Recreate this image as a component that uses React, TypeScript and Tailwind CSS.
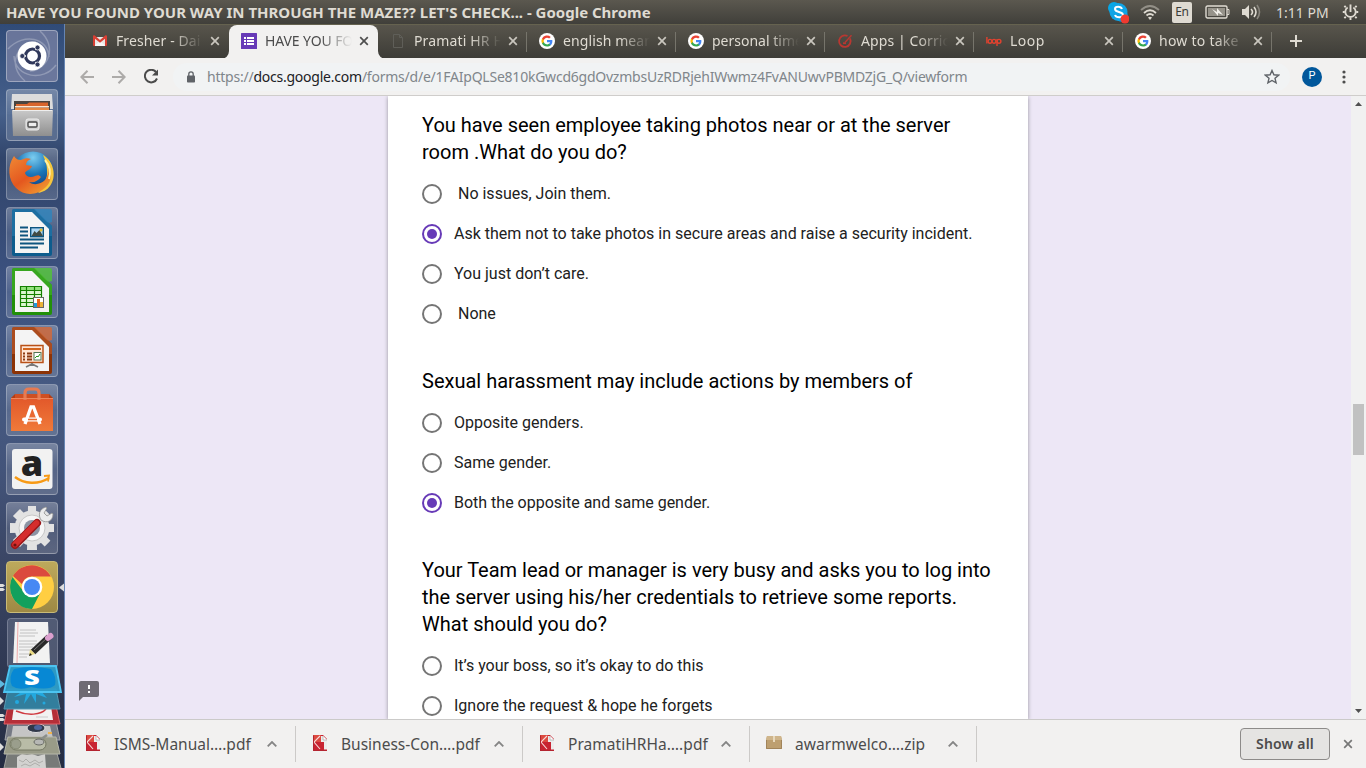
import React from "react";

const UI = "font-['Noto_Sans','Liberation_Sans',sans-serif]";

/* ---------- favicons ---------- */
const Gmail = () => (
  <svg width="16" height="16" viewBox="0 0 16 16">
    <path d="M2 4h12v9H2z" fill="#e8e6e4" />
    <path d="M2 13l5-4h2l5 4z" fill="#f8f8f8" />
    <path d="M1 3.500C1 2.500 2 2 2.800 2.600L8 7l5.200-4.400C14 2 15 2.500 15 3.500V12a1 1 0 0 1-1 1h-1V5.800L8 9.800 3 5.800V13H2a1 1 0 0 1-1-1z" fill="#d93f34" />
  </svg>
);
const FormsIcon = () => (
  <svg width="16" height="16" viewBox="0 0 16 16">
    <rect width="16" height="16" rx="0.500" fill="#673ab7" />
    <path d="M3 4h2v2H3zM6 4h7v2H6zM3 7h2v2H3zM6 7h7v2H6zM3 10h2v2H3zM6 10h7v2H6z" fill="#fff" />
  </svg>
);
const PageIcon = () => (
  <svg width="16" height="16" viewBox="0 0 16 16" fill="none" stroke="#5f5e58">
    <path d="M3.500 1.500h6l3 3v10h-9zM9.500 1.500v3h3" />
  </svg>
);
const GoogleIcon = () => (
  <svg width="16" height="16" viewBox="0 0 16 16">
    <circle cx="8" cy="8" r="8" fill="#fff" />
    <g transform="translate(2.400 2.400) scale(0.467)">
      <path fill="#4285f4" d="M23.500 12.300c0-.8-.1-1.600-.2-2.300H12v4.500h6.500c-.3 1.500-1.100 2.800-2.400 3.600v3h3.900c2.200-2.100 3.500-5.200 3.500-8.800z" />
      <path fill="#34a853" d="M12 24c3.200 0 6-1.100 7.900-2.900l-3.900-3c-1.100.7-2.400 1.200-4 1.200-3.100 0-5.800-2.100-6.700-4.900h-4v3.100C3.300 21.400 7.300 24 12 24z" />
      <path fill="#fbbc05" d="M5.300 14.400a7 7 0 0 1 0-4.600V6.700h-4a12 12 0 0 0 0 10.800z" />
      <path fill="#ea4335" d="M12 4.800c1.800 0 3.300.6 4.600 1.800L20 3.200A12 12 0 0 0 1.300 6.700l4 3.100C6.200 6.900 8.900 4.800 12 4.800z" />
    </g>
  </svg>
);
const GaugeIcon = () => (
  <svg width="16" height="16" viewBox="0 0 16 16" fill="none" stroke="#b93731" strokeWidth="1.800">
    <path d="M10.500 3A5.800 5.800 0 1 0 13 5.500" />
    <path d="M14.500 2.200L8 9.500" strokeWidth="1.400" />
    <path d="M6 10.200h3" />
  </svg>
);
const LoopIcon = () => (
  <svg width="16" height="16" viewBox="0 0 16 16" fill="none" stroke="#e2422f" strokeWidth="1.400">
    <path d="M.9 4v6.500M11 6v7" />
    <circle cx="4" cy="8.300" r="1.900" /><circle cx="8" cy="8.300" r="1.900" /><circle cx="13" cy="8.300" r="1.900" />
  </svg>
);
const Cross = ({ color }: { color: string }) => (
  <svg width="10" height="10" viewBox="0 0 10 10" stroke={color} strokeWidth="1.700"><path d="M1.200 1.200l7.600 7.600M8.800 1.200L1.200 8.800" /></svg>
);

type TabData = { title: string; icon: React.ReactNode; active?: boolean; sep?: boolean; tracking: string };
const tabs: TabData[] = [
  { title: "Fresher - Dai", icon: <Gmail />, tracking: "tracking-[0.1px]" },
  { title: "HAVE YOU FO", icon: <FormsIcon />, active: true, tracking: "tracking-[-0.1px]" },
  { title: "Pramati HR H", icon: <PageIcon />, sep: true, tracking: "tracking-[0.15px]" },
  { title: "english mean", icon: <GoogleIcon />, sep: true, tracking: "tracking-[0.1px]" },
  { title: "personal time", icon: <GoogleIcon />, sep: true, tracking: "tracking-[0px]" },
  { title: "Apps | Corric", icon: <GaugeIcon />, sep: true, tracking: "tracking-[0.1px]" },
  { title: "Loop", icon: <LoopIcon />, sep: true, tracking: "tracking-[0.5px]" },
  { title: "how to take", icon: <GoogleIcon />, sep: true, tracking: "tracking-[0.25px]" },
];

const Tab = ({ t }: { t: TabData }) => (
  <div className={"relative flex h-[34px] w-[149px] shrink-0 items-center pb-px pl-3 " + (t.active ? "rounded-t-lg bg-[#f2f1f0] text-[#4c4c4c]" : "text-[#dfdbd2]")}>
    {t.active && (
      <svg className="absolute bottom-0 -left-2" width="8" height="8"><path d="M8 0v8H0a8 8 0 0 0 8-8z" fill="#f2f1f0" /></svg>
    )}
    {t.active && (
      <svg className="absolute -right-2 bottom-0" width="8" height="8"><path d="M0 0v8h8a8 8 0 0 1-8-8z" fill="#f2f1f0" /></svg>
    )}
    <span className="w-4 shrink-0">{t.icon}</span>
    <span className={"ml-2 w-[87px] overflow-hidden text-[14px] leading-5 whitespace-nowrap [mask-image:linear-gradient(to_right,black_56px,transparent_87px)] " + t.tracking}>{t.title}</span>
    <span className="ml-[7px]"><Cross color={t.active ? "#4f4f4f" : "#c9c6be"} /></span>
    {t.sep && <span className="absolute top-[7px] right-0 h-5 w-px bg-[#76746b]" />}
  </div>
);

/* ---------- launcher icons, each on a 52px tile ---------- */
const Ubuntu = () => (
  <>
    <g fill="none" stroke="#fff" strokeOpacity=".25" strokeWidth="1.500">
      <path d="M2 19C18 2 42 8 43 27M50 35C38 52 9 48 8 26M19 51C0 35 12 12 30 12M34 1c18 16 8 39-10 40" />
    </g>
    <circle cx="26" cy="26" r="14.500" fill="#fff" />
    <circle cx="26.500" cy="26" r="7" fill="none" stroke="#30385b" strokeWidth="3.200" />
    <g stroke="#fff" strokeWidth="1.300"><path d="M20 26h-5M29.500 20l2.500-4M29.500 32l2.500 4" /></g>
    <g fill="#30385b" stroke="#fff" strokeWidth=".7"><circle cx="16.300" cy="26" r="2.500" /><circle cx="31.500" cy="17.500" r="2.500" /><circle cx="31.500" cy="34.500" r="2.500" /></g>
  </>
);
const Files = () => (
  <>
    <defs><linearGradient id="steel" x1="0" y1="0" x2="0" y2="1"><stop stopColor="#c9c9c9" /><stop offset="1" stopColor="#8f8f8f" /></linearGradient></defs>
    <path d="M6 5h40l1 15H5z" fill="#dcdcdc" /><path d="M8 12h36v13H8z" fill="#4a4540" />
    <path d="M10 15h11l2-1.500h19v5H10z" fill="#d9652c" /><path d="M9 17h34v1.500H9z" fill="#fbe6cf" /><path d="M9 19h34v3H9z" fill="#e88a45" />
    <path d="M6 21h41l-1 26H7z" fill="url(#steel)" /><path d="M7 21.500h39" stroke="#eee" />
    <rect x="20" y="30" width="13" height="11" rx="2" fill="#d0d0d0" stroke="#eee" /><rect x="22" y="33" width="9" height="5" rx="1" fill="#eee" stroke="#4a4a4a" strokeWidth="1.400" />
  </>
);
const Firefox = () => (
  <>
    <defs>
      <radialGradient id="sky" cx=".5" cy=".15" r=".8"><stop stopColor="#7ccdf0" /><stop offset=".5" stopColor="#1b76b8" /><stop offset="1" stopColor="#123a7c" /></radialGradient>
      <linearGradient id="fire" x1="0" y1="0" x2=".8" y2="1"><stop stopColor="#f08a35" /><stop offset=".55" stopColor="#e4571f" /><stop offset="1" stopColor="#f19a32" /></linearGradient>
    </defs>
    <circle cx="27" cy="24" r="20.500" fill="url(#sky)" />
    <path d="M37 7c11 6 14 22 7 31-3 4-7 6-12 7 6-7 10-15 9-23 0-5-2-10-4-15z" fill="#f6c63d" />
    <path d="M8 8c2 3 4 4 7 4 4-2 7-2 10-1-3 1-5 3-5 6l6 1c-1 4-6 4-7 7 1 4 6 5 10 3 3-1 4-1 6 1-3 4-7 6-12 5 5 4 12 2 16-2 3-4 4-9 3-14 4 7 4 15-2 21-9 9-22 9-30 1C2 32 1 18 8 8z" fill="url(#fire)" />
    <path d="M39 12c5 6 6 12 4 19" stroke="#fff0a0" strokeWidth="2" fill="none" />
  </>
);
const Doc = ({ c, d, children }: { c: string; d: string; children: React.ReactNode }) => (
  <>
    <path d="M8 2h21l17 17v28a2 2 0 0 1-2 2H8a2 2 0 0 1-2-2V4a2 2 0 0 1 2-2z" fill={d} /><path d="M6 4a2 2 0 0 1 2-2h21l17 17v10H6z" fill={c} opacity=".45" />
    <path d="M9 5h17l17 17v24H9z" fill="#f4f4f4" /><path d="M28 2h16a2 2 0 0 1 2 2v11q-4 2-6-1z" fill={c} opacity=".85" />
    {children}
  </>
);
const Writer = () => (
  <Doc c="#3184bb" d="#0d5c8d">
    <path d="M14 20.500h8M14 24.500h8M14 28.500h8M14 32.500h24M14 36.500h24M14 40.500h18" stroke="#0d557f" strokeWidth="2" />
    <rect x="24.700" y="20.700" width="12.600" height="9" fill="#aed7f3" stroke="#0d557f" strokeWidth="1.400" /><path d="M25.500 29l3-5 2 2 3-3 3.500 6z" fill="#414b43" /><circle cx="35" cy="23" r="1.500" fill="#e3bd33" />
  </Doc>
);
const Calc = () => (
  <Doc c="#52c13b" d="#229009">
    <rect x="14" y="20" width="22" height="21" fill="#94e37c" /><path d="M14 25h22v16H14z" fill="#dcf6d2" /><path d="M14.500 20.500h21v20h-21zM14 24.500h22M14 28.500h22M14 32.500h22M14 36.500h22M20.500 20v21M28.500 20v21" stroke="#148000" fill="none" strokeWidth="1.200" />
    <rect x="27.500" y="31.500" width="10" height="10" fill="#fff" stroke="#666" /><path d="M28 37h3v4h-3z" fill="#229bd8" /><path d="M31 33h3v8h-3z" fill="#ea6518" /><path d="M34 36h3v5h-3z" fill="#e9b43a" />
  </Doc>
);
const Impress = () => (
  <Doc c="#d06a3c" d="#8c3306">
    <rect x="15" y="20.500" width="22" height="17" fill="#ffe5d4" stroke="#b95117" strokeWidth="1.500" /><path d="M17 24h18" stroke="#d3651d" strokeWidth="2" />
    <path d="M17 28.500h2M17 31.500h2M17 34.500h2M21 28.500h5M21 31.500h5M21 34.500h5" stroke="#8b3911" strokeWidth="1.800" /><rect x="28" y="27.500" width="7" height="7.500" fill="#fff" stroke="#575" /><path d="M29 33l2-2 1 1 2-3" stroke="#279719" fill="none" />
    <path d="M26 38v3M26 39l-6 3M26 39l6 3" stroke="#777" strokeWidth="1.700" />
  </Doc>
);
const Software = () => (
  <>
    <defs><linearGradient id="bag" x1="0" y1="0" x2="0" y2="1"><stop stopColor="#e2582a" /><stop offset="1" stopColor="#f07a3a" /></linearGradient></defs>
    <path d="M5 14l4-4v4M47 14l-4-4v4" fill="#b63c11" /><path d="M9 10h34v5H9z" fill="#cf4f22" />
    <path d="M5 14h42v33H5z" fill="url(#bag)" />
    <path d="M19 16V9q0-4 4-4h6q4 0 4 4v7" fill="none" stroke="#e77a51" strokeWidth="3.200" /><path d="M5 14.500h42" stroke="#ee865c" />
    <path d="M19 40l6-17h2.500L34 40" fill="none" stroke="#fff" strokeWidth="3.300" /><path d="M18 35.500h16" stroke="#fff" strokeWidth="4" strokeLinecap="round" /><path d="M22 35.500h9" stroke="#ec6c33" strokeWidth="1.600" />
  </>
);
const Amazon = () => (
  <>
    <rect x="6" y="6" width="40.500" height="40" rx="3" fill="#f2f2f2" />
    <text x="26" y="33" textAnchor="middle" fontFamily="Open Sans" fontWeight="800" fontSize="36" fill="#222">a</text>
    <path d="M9 34c9 7 23 8 34 1" fill="none" stroke="#f79a15" strokeWidth="2.500" /><path d="M38 33l5-.5-1 6" fill="none" stroke="#f79a15" strokeWidth="1.800" />
  </>
);
const Settings = () => (
  <>
    <g fill="#e2e2e2">
      {[0, 45, 90, 135].map((a) => <path key={a} d="M22 4h8l1 44H21z" transform={`rotate(${a} 26 26)`} />)}
      <circle cx="26" cy="26" r="17.500" />
    </g>
    <circle cx="26" cy="26" r="13" fill="#f6f6f6" stroke="#c7c7c7" /><circle cx="26" cy="26" r="8" fill="#8c94a4" />
    <path d="M33 20l5-5" stroke="#e4e4e4" strokeWidth="5" />
    <path d="M35 18c-3-5-2-11 5-13l1 1-3 5 3 3 5-3 1 1c0 7-6 10-12 6z" fill="#ececec" stroke="#8f8f8f" strokeWidth=".8" />
    <path d="M9 43L31 21" stroke="#9b1719" strokeWidth="8" strokeLinecap="round" /><path d="M9 42.500L30.500 21" stroke="#d52d2d" strokeWidth="5.500" strokeLinecap="round" /><circle cx="9" cy="43" r="1.600" fill="#6b1212" />
  </>
);
const Chrome = () => (
  <>
    <circle cx="26" cy="26" r="22" fill="#ffce42" />
    <path d="M7 15a22 22 0 0 1 38 0.500H26c-6 0-9 4-9.600 8z" fill="#db4a3e" /><path d="M6.500 16A22 22 0 0 0 26 48l8.500-16.500c-5 6-14 4.500-17-1z" fill="#12a05d" />
    <circle cx="26" cy="26" r="10.300" fill="#fff" /><circle cx="26" cy="26" r="8" fill="#4688f4" />
  </>
);
const launcher = [Ubuntu, Files, Firefox, Writer, Calc, Impress, Software, Amazon, Settings, Chrome];

const Stack = () => (
  <svg width="64" height="155" viewBox="0 0 64 155" className="block shrink-0">
    <rect x="7.500" y="5.500" width="50" height="49" rx="3" fill="#69728a" fillOpacity=".55" stroke="#a8aebf" strokeOpacity=".5" />
    <path d="M15 9h33l2 41H13z" fill="#f2f2f2" /><path d="M18 9l-1 41" stroke="#efaaaa" />
    <path d="M20 17h16M20 20h18M19 23h16M19 28h18M19 31h19M19 34h14M19 37h12M19 41h10M19 44h8" stroke="#bbb" strokeWidth=".9" />
    <path d="M33 39L49 24" stroke="#292929" strokeWidth="6.500" /><path d="M34 37L48 24" stroke="#737373" /><path d="M29 43l1-7 5 5z" fill="#e9d982" /><path d="M29 43l1-3 2 2z" fill="#222" /><path d="M48 25l2.500-2" stroke="#db9fce" strokeWidth="6" strokeLinecap="round" />
    <path d="M8 137h48l5 18H4z" fill="#777a78" stroke="#a1a39e" /><path d="M17 144l5-3 5 1 5-1 6 2 7-2 1 14H17z" fill="#d2d2d0" /><path d="M19 147l4 2 3-3 4 4 5-3 4 3 4-2M21 153l4-2 5 2 5-3 5 3" stroke="#aeaeab" fill="none" />
    <path d="M8 109h48l4 18H5z" fill="#757984" stroke="#a4a6ab" /><path d="M13 113h37l3 12H11z" fill="#c5c5c5" /><ellipse cx="36" cy="115" rx="9" ry="4.500" fill="#303849" stroke="#ddd" /><ellipse cx="38" cy="114.500" rx="4" ry="2.500" fill="#4d639b" /><path d="M48 120h4" stroke="#f0b34d" strokeWidth="2" />
    <path d="M8 124h48l4 17H4z" fill="#999b88" stroke="#b7b8ab" /><rect x="10" y="125" width="36" height="12" rx="6" fill="#b9bca7" stroke="#747863" /><ellipse cx="16" cy="131" rx="5" ry="5" fill="#9a9e8c" stroke="#747863" strokeWidth=".7" /><path d="M36 130l11-8" stroke="#8b8e89" strokeWidth="2.500" /><ellipse cx="39" cy="129" rx="5" ry="3" fill="#b6b7b4" stroke="#696b66" />
    <path d="M8 93h48l4 18H4z" fill="#b52f38" stroke="#e06067" /><path d="M14 93h37l2 14H12z" fill="#f2f2f2" /><path d="M16 98c12 5 25 4 30-2" stroke="#d03b42" strokeWidth="1.500" fill="none" /><path d="M36 104h12" stroke="#ccc" />
    <path d="M8 76h48l4 20H4z" fill="#327e9d" stroke="#5798b1" /><path d="M23 78l-9 6 12-3-2 10 7-10 5 9v-9l11 4-6-7z" fill="#23a9df" /><circle cx="17" cy="89" r="2" fill="#23a9df" /><circle cx="44" cy="90" r="1.500" fill="#23a9df" />
    <path d="M10 53h46l5 26H4z" fill="#2e9fcb" fillOpacity=".94" stroke="#4cc4f2" strokeWidth="1.800" /><path d="M14 56q17-4 37 0 6 8 4 16-6 6-24 2-12 4-19-1-4-9 2-17z" fill="#0788d4" />
    <text x="32" y="72" textAnchor="middle" fontFamily="Open Sans" fontWeight="800" fontSize="21" fill="#fff" transform="translate(-9.600 0) scale(1.300 1)">S</text>
    <path d="M0 67l5 4-5 4z" fill="#5fb9df" /><path d="M0 84l4 4-4 4zM0 130l4 4-4 4zM0 101h3l2 2-2 1H0zM0 105h3l2 2-2 1H0z" fill="#ddd" />
  </svg>
);

const Launcher = () => (
  <aside className="relative flex w-[65px] shrink-0 flex-col gap-[7px] overflow-hidden border-r border-[#6685b3] bg-[linear-gradient(to_bottom,#304b78_0,#46608b_12%,#31456b_18%,#3c5280_35%,#465a82_50%,#43547a_60%,#3b4665_72%,#242c42_100%)] pt-[6px]">
    {launcher.map((Icon, i) => (
      <div key={i} className={"ml-[6px] h-[52px] w-[52px] shrink-0 rounded border " + (i === 9 ? "border-[#c9bb77] bg-[linear-gradient(#bda95c,#9e8944)]" : i === 0 ? "border-white/35 bg-[#7780a3]/80" : "border-white/25 bg-[linear-gradient(rgba(255,255,255,.28),rgba(255,255,255,.1)_50%,rgba(255,255,255,.17))]")}>
        <svg width="52" height="52" viewBox="0 0 52 52" className="-m-px block"><Icon /></svg>
      </div>
    ))}
    <div className="-mt-[7px]"><Stack /></div>
    <svg className="absolute top-[556px] left-0" width="64" height="14"><path d="M0 4h3l2 1.500L3 7H0zM0 8h3l2 1.500L3 11H0zM64 3.500v8L59 7.500z" fill="#ddd" /></svg>
  </aside>
);

/* ---------- form ---------- */
type Question = { lines: string[]; options: string[]; selected: number };
const questions: Question[] = [
  { lines: ["You have seen employee taking photos near or at the server", "room .What do you do?"], options: [" No issues, Join them.", "Ask them not to take photos in secure areas and raise a security incident.", "You just don’t care.", " None"], selected: 1 },
  { lines: ["Sexual harassment may include actions by members of"], options: ["Opposite genders.", "Same gender.", "Both the opposite and same gender."], selected: 2 },
  { lines: ["Your Team lead or manager is very busy and asks you to log into", "the server using his/her credentials to retrieve some reports.", "What should you do?"], options: ["It’s your boss, so it’s okay to do this", "Ignore the request & hope he forgets"], selected: -1 },
];

const Form = () => (
  <div className="flex h-full w-[640px] flex-col gap-[34px] overflow-hidden bg-white px-[34px] pt-4 font-['Roboto',sans-serif] shadow-[0_1px_4px_rgba(0,0,0,.37)]">
    {questions.map((q) => (
      <section key={q.lines[0]} className="shrink-0">
        <h2 className="mb-2 text-[20px] leading-[27px] font-normal whitespace-nowrap text-black">
          {q.lines.map((l) => <span key={l} className="block">{l}</span>)}
        </h2>
        {q.options.map((o, i) => (
          <div key={o} className="flex h-10 items-center gap-3">
            <span className={"flex h-5 w-5 shrink-0 items-center justify-center rounded-full border-2 " + (i === q.selected ? "border-[#673ab7]" : "border-[#757575]")}>
              {i === q.selected && <span className="h-[10px] w-[10px] rounded-full bg-[#673ab7]" />}
            </span>
            <span className="text-[16px] leading-5 whitespace-pre text-[#212121]">{o}</span>
          </div>
        ))}
      </section>
    ))}
  </div>
);

/* ---------- downloads ---------- */
const Pdf = () => (
  <svg width="16" height="16" viewBox="0 0 16 16"><path d="M1 0h10l4 4v12H1z" fill="#c82432" /><path d="M1 0h8v7H1z" fill="#dc4a40" /><path d="M8 1L2 7l6 7" stroke="#f6dada" fill="none" strokeWidth="1.100" /><path d="M1.500 .500v15h13" fill="none" stroke="#b32430" /><path d="M9 1h2l4 4v9.500h-3V7H9z" fill="#ececec" /><path d="M11 1v4h4" fill="#fff" stroke="#aaa" strokeWidth=".7" /></svg>
);
const Zip = () => (
  <svg width="16" height="16" viewBox="0 0 16 16"><path d="M1 1h14l1 4v9H0V5z" fill="#bd9f70" /><path d="M1 1h14l1 4H0z" fill="#cfb58b" /><path d="M7 1h2v6H7z" fill="#e8d9bd" /><path d="M.5 5v8.500h15V5" fill="none" stroke="#a1845a" /></svg>
);
const downloads = [
  { name: "ISMS-Manual….pdf", icon: <Pdf />, t: "tracking-[0px]" },
  { name: "Business-Con….pdf", icon: <Pdf />, t: "tracking-[0px]" },
  { name: "PramatiHRHa….pdf", icon: <Pdf />, t: "tracking-[0.05px]" },
  { name: "awarmwelco….zip", icon: <Zip />, t: "tracking-[0.05px]" },
];

export default function App() {
  return (
    <div className={"flex h-[768px] w-[1366px] flex-col overflow-hidden " + UI}>
      <header className="flex h-6 shrink-0 items-center justify-between bg-[linear-gradient(#5b584f,#403f3a)] pr-[7px] pl-[6px] text-[#dfdbd2]">
        <h1 className="text-[15px] leading-6 font-bold tracking-[-0.01px] whitespace-nowrap">HAVE YOU FOUND YOUR WAY IN THROUGH THE MAZE?? LET'S CHECK... - Google Chrome</h1>
        <div className="flex items-center">
          <svg width="22" height="24" viewBox="0 0 22 24"><circle cx="7" cy="8" r="6" fill="#06a8e8" /><circle cx="15" cy="16" r="6" fill="#0a91d7" /><circle cx="11.500" cy="12" r="9" fill="#0fa4e5" /><path d="M15 9c-1-3-7-3-7 0 0 4 8 2 8 6 0 3-7 3-8 0" fill="none" stroke="#fff" strokeWidth="2" /><circle cx="18" cy="19" r="4.500" fill="#ef3a30" /></svg>
          <svg className="ml-[11px]" width="20" height="18" viewBox="0 0 20 18" fill="none" stroke="#dfdbd2" strokeWidth="1.800"><path d="M1 7q9-8 18 0" strokeOpacity=".45" /><path d="M4 10q6-5.500 12 0M6.500 12.500q3.500-3 7 0" /><path d="M8 14.500q2-1.500 4 0l-2 2.500z" fill="#dfdbd2" stroke="none" /></svg>
          <span className="ml-3 flex h-[21px] w-5 items-center justify-center rounded-[2px] bg-[#dfdbd2] text-[12px] tracking-[-0.3px] text-[#3c3b37]">En</span>
          <svg className="ml-[13px]" width="25" height="14" viewBox="0 0 25 14"><rect x="1" y="1" width="21" height="12" rx="1.500" fill="none" stroke="#dfdbd2" strokeWidth="1.400" /><path d="M22 4.500h2v5h-2" fill="none" stroke="#dfdbd2" /><path d="M3 3h17v8H3z" fill="#96938a" /><path d="M7 4l5 3V3l6 7-5-2v3z" fill="#f0eee8" /></svg>
          <svg className="ml-[11px]" width="21" height="18" viewBox="0 0 21 18"><path d="M1 6h3l4-4v14l-4-4H1z" fill="#dfdbd2" /><path d="M10 6q3 3 0 6M13 4q4 5 0 10" fill="none" stroke="#dfdbd2" strokeWidth="1.600" /><path d="M16 2q5 7 0 14" fill="none" stroke="#88857d" strokeWidth="1.600" /></svg>
          <span className="ml-[14px] w-[54px] text-[14px] tracking-[0px] whitespace-nowrap">1:11 PM</span>
          <svg className="ml-3" width="17" height="18" viewBox="0 0 18 18" fill="none" stroke="#dfdbd2"><path d="M6 4.200a5.500 5.500 0 1 0 6 0" strokeWidth="1.900" /><path d="M9 1v8" strokeWidth="2" /><path d="M4 4L2.500 2.500M14 4l1.500-1.500M3 9H.8M15 9h2.200M4 14l-1.500 1.500M14 14l1.500 1.500M9 15v2.500" strokeWidth="2" /></svg>
        </div>
      </header>

      <div className="flex min-h-0 flex-1">
        <Launcher />
        <div className="flex min-w-0 flex-1 flex-col">
          <nav className="flex h-[34px] shrink-0 items-center border-t border-[#65624f] bg-[linear-gradient(#58554c,#3d3c37)] pl-[15px]">
            {tabs.map((t) => <Tab key={t.title} t={t} />)}
            <svg className="mb-px ml-[18px]" width="12" height="12" stroke="#dfdbd2" strokeWidth="2"><path d="M6 0v12M0 6h12" /></svg>
          </nav>

          <div className="flex h-[38px] shrink-0 items-center border-b border-[#cfcdcb] bg-[#f2f1f0] pl-[15px]">
            <svg width="14" height="14" viewBox="0 0 14 14" fill="none" stroke="#adaba9" strokeWidth="2"><path d="M14 7H1.500M7.500 .8L1.400 7l6.100 6.200" /></svg>
            <svg className="ml-[18px]" width="14" height="14" viewBox="0 0 14 14" fill="none" stroke="#adaba9" strokeWidth="2"><path d="M0 7h12.500M6.500 .8L12.600 7l-6.100 6.200" /></svg>
            <svg className="ml-[18px]" width="15" height="15" viewBox="0 0 15 15"><path d="M12 3A6.300 6.300 0 1 0 13 9.500" fill="none" stroke="#4b4b4b" strokeWidth="2" /><path d="M14 .5v6H8z" fill="#4b4b4b" /></svg>
            <div className="ml-[14px] flex h-7 w-[1117px] items-center rounded-full bg-[#f1f3f4] pl-[13px]">
              <svg width="10" height="12" viewBox="0 0 10 12"><rect x="1" y="4.500" width="8" height="7" rx=".8" fill="#5f6368" /><path d="M2.800 5V3a2.200 2.200 0 0 1 4.400 0v2" fill="none" stroke="#5f6368" strokeWidth="1.300" /></svg>
              <span className="ml-[11px] text-[14px] tracking-[-0.232px] whitespace-nowrap text-[#80868b]">https://<span className="text-[#202124]">docs.google.com</span>/forms/d/e/1FAIpQLSe810kGwcd6gdOvzmbsUzRDRjehIWwmz4FvANUwvPBMDZjG_Q/viewform</span>
              <svg className="mr-[10px] ml-auto" width="16" height="16" viewBox="0 0 16 16"><path d="M8 1.500l1.900 4.300 4.700.4-3.600 3.100 1.100 4.600L8 11.500l-4.100 2.400L5 9.300 1.400 6.200l4.700-.4z" fill="none" stroke="#5f6368" strokeWidth="1.400" /></svg>
            </div>
            <span className="ml-3 flex h-5 w-5 items-center justify-center rounded-full bg-[#01579b] font-['Roboto',sans-serif] text-[11px] text-white">P</span>
            <svg className="ml-5" width="4" height="14" fill="#4d4d4d"><circle cx="2" cy="2" r="1.600" /><circle cx="2" cy="7" r="1.600" /><circle cx="2" cy="12" r="1.600" /></svg>
          </div>

          <main className="relative flex min-h-0 flex-1 bg-[#ede7f6]">
            <div className="flex min-w-0 flex-1 overflow-hidden pl-[323px]"><Form /></div>
            <div className="flex w-[15px] flex-col items-center justify-between bg-[#f1f1f1] py-[6px]">
              <svg width="7" height="4"><path d="M0 4l3.500-4L7 4z" fill="#505050" /></svg>
              <svg width="7" height="4"><path d="M0 0l3.500 4L7 0z" fill="#505050" /></svg>
            </div>
            <span className="absolute top-[308px] right-[2px] h-[51px] w-[11px] bg-[#c1c1c1]" />
            <svg className="absolute top-[585px] left-[14px]" width="20" height="20" viewBox="0 0 20 20"><path d="M2 0h16a2 2 0 0 1 2 2v12a2 2 0 0 1-2 2H4l-4 4V2a2 2 0 0 1 2-2z" fill="#6f6b74" /><path d="M9 4h2v4H9zM9 10h2v2H9z" fill="#fff" /></svg>
          </main>

          <footer className="flex h-[49px] shrink-0 items-center border-t border-[#cbcac9] bg-[#f2f1f0]">
            {downloads.map((d) => (
              <div key={d.name} className="flex h-9 w-[227px] shrink-0 items-center border-r border-[#cccac8] pl-4 text-[#4c4c4c] first:w-[231px] first:pl-5">
                <span className="mb-[2px]">{d.icon}</span>
                <span className={"mt-[2px] ml-[13px] w-[144px] text-[15.500px] whitespace-nowrap " + d.t}>{d.name}</span>
                <svg className="ml-[9px]" width="10" height="6" fill="none" stroke="#858585" strokeWidth="1.800"><path d="M.7 5.300L5 1l4.300 4.300" /></svg>
              </div>
            ))}
            <button className="mb-px ml-auto h-8 w-[90px] rounded border border-[#8d8b89] bg-[#e5e4e2] text-[14px] font-semibold tracking-[0.2px] text-[#4c4c4c]">Show all</button>
            <span className="mr-[13px] ml-[13px]"><Cross color="#777" /></span>
          </footer>
        </div>
      </div>
    </div>
  );
}
